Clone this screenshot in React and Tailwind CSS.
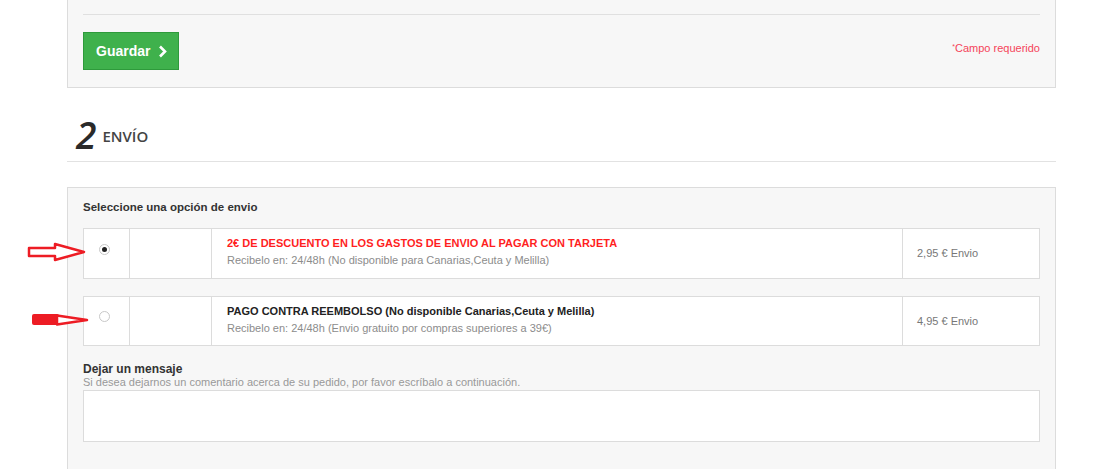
import React from "react";

const options = [
  {
    id: 1,
    title: "2€ DE DESCUENTO EN LOS GASTOS DE ENVIO AL PAGAR CON TARJETA",
    note: "Recibelo en: 24/48h (No disponible para Canarias,Ceuta y Melilla)",
    price: "2,95 € Envio",
    red: true,
    checked: true,
  },
  {
    id: 2,
    title: "PAGO CONTRA REEMBOLSO (No disponible Canarias,Ceuta y Melilla)",
    note: "Recibelo en: 24/48h (Envio gratuito por compras superiores a 39€)",
    price: "4,95 € Envio",
    red: false,
    checked: false,
  },
];

function Radio({ checked }) {
  return (
    <span className="flex h-[11px] w-[11px] items-center justify-center rounded-full border border-[#c8c8c8] bg-white">
      {checked && <span className="h-[5px] w-[5px] rounded-full bg-[#222]" />}
    </span>
  );
}

function Arrows() {
  return (
    <svg
      className="pointer-events-none absolute left-0 top-0"
      width="100"
      height="469"
      viewBox="0 0 100 469"
    >
      <polygon
        points="29,248 55,248 55,244 84,252 55,260 55,256 29,256"
        fill="#fff"
        stroke="#ed1c24"
        strokeWidth="2.5"
        strokeLinejoin="round"
      />
      <rect x="32" y="314" width="27" height="11" rx="2" fill="#ed1c24" />
      <polygon
        points="57,315.5 87,320 57,324.5"
        fill="#fff"
        stroke="#ed1c24"
        strokeWidth="2.5"
        strokeLinejoin="round"
      />
    </svg>
  );
}

export default function App() {
  return (
    <div
      className="relative h-[469px] w-[1100px] overflow-hidden bg-white"
      style={{ fontFamily: '"Liberation Sans", Arial, sans-serif' }}
    >
      <div className="ml-[67px] w-[989px]">
        {/* datos panel (bottom part) */}
        <div className="h-[88px] border-x border-b border-[#dcdcdc] bg-[#f7f7f7] px-[15px]">
          <div className="h-[15px] border-b border-[#e0e0e0]" />
          <div className="mt-[17px] flex items-start justify-between">
            <button className="flex h-[38px] items-center gap-[8px] border border-[#2e9a3b] bg-[#3fb14c] pl-[12px] pr-[11px] text-[14px] font-bold text-white">
              Guardar
              <svg width="9" height="13" viewBox="0 0 9 13">
                <polyline
                  points="2,1.5 7,6.5 2,11.5"
                  fill="none"
                  stroke="#fff"
                  strokeWidth="2.6"
                />
              </svg>
            </button>
            <p className="mt-[8px] text-[11px] text-[#f5445a]">
              <sup className="text-[7px]">*</sup>Campo requerido
            </p>
          </div>
        </div>

        {/* heading */}
        <div
          className="flex h-[74px] items-end gap-[6px] border-b border-[#e2e2e2] pb-[6px] pl-[9px]"
          style={{ fontFamily: '"Open Sans", sans-serif' }}
        >
          <span className="text-[37px] font-semibold italic leading-[40px] text-[#2a2a2a]">2</span>
          <span className="mb-[10px] text-[15px] font-semibold leading-[18px] text-[#444]">
            ENVÍO
          </span>
        </div>

        {/* envio panel */}
        <div className="mt-[25px] h-[400px] border border-[#dcdcdc] bg-[#f7f7f7] px-[15px] pt-[12px]">
          <p className="text-[11.5px] font-bold leading-[14px] text-[#333]">
            Seleccione una opción de envio
          </p>

          {options.map((o, i) => (
            <div
              key={o.id}
              className={`flex border border-[#dcdcdc] bg-white ${
                i === 0 ? "mt-[14px] h-[51px]" : "mt-[17px] h-[50px]"
              }`}
            >
              <div
                className={`w-[46px] border-r border-[#dcdcdc] pl-[15px] ${
                  i === 0 ? "pt-[15px]" : "pt-[14px]"
                }`}
              >
                <Radio checked={o.checked} />
              </div>
              <div className="w-[82px] border-r border-[#dcdcdc]" />
              <div className="flex-1 border-r border-[#dcdcdc] pl-[15px] pt-[6px]">
                <p
                  className={`text-[11px] font-bold leading-[16px] ${
                    o.red ? "text-[#ff1f1f]" : "text-[#222]"
                  }`}
                >
                  {o.title}
                </p>
                <p className="mt-[1px] text-[11px] leading-[16px] text-[#8c8c8c]">
                  {o.note}
                </p>
              </div>
              <div className="flex w-[136px] items-center pl-[14px] text-[11px] text-[#777]">
                {o.price}
              </div>
            </div>
          ))}

          <p className="mt-[16px] text-[12px] font-bold leading-[14px] text-[#333]">
            Dejar un mensaje
          </p>
          <p className="text-[11px] leading-[12px] text-[#999]">
            Si desea dejarnos un comentario acerca de su pedido, por favor escríbalo a continuación.
          </p>
          <textarea className="mt-[2px] block h-[52px] w-full resize-none border border-[#dcdcdc] bg-white" />
        </div>
      </div>

      <Arrows />
    </div>
  );
}
